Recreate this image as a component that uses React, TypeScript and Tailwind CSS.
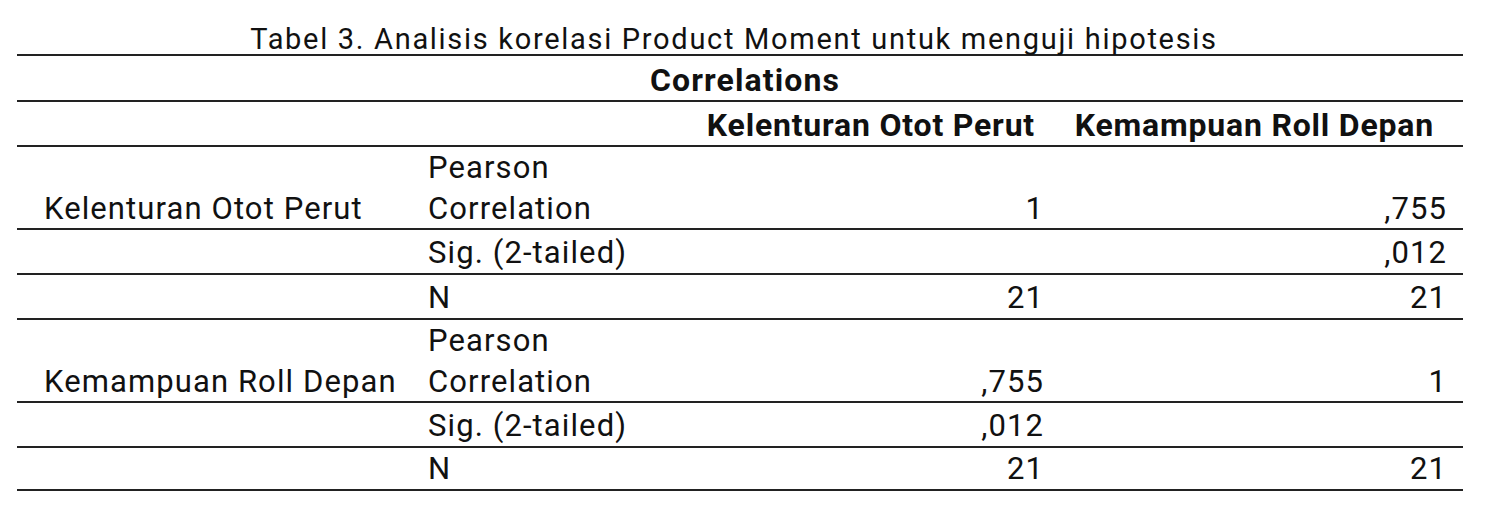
const font = { fontFamily: 'Roboto, "Liberation Sans", sans-serif' };

type Row = {
  label?: string;
  stat: string[];
  a: string;
  b: string;
  tall?: boolean;
};

const rows: Row[] = [
  { label: "Kelenturan Otot Perut", stat: ["Pearson", "Correlation"], a: "1", b: ",755", tall: true },
  { stat: ["Sig. (2-tailed)"], a: "", b: ",012" },
  { stat: ["N"], a: "21", b: "21" },
  { label: "Kemampuan Roll Depan", stat: ["Pearson", "Correlation"], a: ",755", b: "1", tall: true },
  { stat: ["Sig. (2-tailed)"], a: ",012", b: "" },
  { stat: ["N"], a: "21", b: "21" },
];

export default function App() {
  return (
    <div className="w-[1500px] h-[522px] bg-white text-[#111]" style={font}>
      <div className="ml-[17px] w-[1446px]">
        <div className="h-[54px] flex items-end justify-center text-[29px] leading-[30px] tracking-[1.7px] pr-[12px]">
          Tabel 3. Analisis korelasi Product Moment untuk menguji hipotesis
        </div>
        <div className="border-t-2 border-[#222] h-[46px] flex items-end justify-center font-bold text-[32px] leading-[40px] tracking-[1.1px] pl-[10px]">
          Correlations
        </div>
        <div className="grid grid-cols-[395px_276px_374px_401px] border-t-2 border-[#222] h-[45px] items-end font-bold text-[32px] leading-[40px] tracking-[0.8px]">
          <div />
          <div />
          <div className="text-right pr-[27px]">Kelenturan Otot Perut</div>
          <div className="text-right pr-[29px]">Kemampuan Roll Depan</div>
        </div>
        {rows.map((r, i) => (
          <div
            key={i}
            className={`grid grid-cols-[395px_276px_374px_401px] border-t-2 border-[#222] items-end text-[31px] leading-[41px] tracking-[1.1px] ${
              r.tall ? "h-[83px]" : "h-[45px]"
            } ${i === rows.length - 1 ? "border-b-2" : ""}`}
          >
            <div className="pl-[27px] whitespace-nowrap">{r.label}</div>
            <div className="pl-[16px] whitespace-nowrap">
              {r.stat.map((s) => (
                <div key={s}>{s}</div>
              ))}
            </div>
            <div className="text-right pr-[18px]">{r.a}</div>
            <div className="text-right pr-[16px]">{r.b}</div>
          </div>
        ))}
      </div>
    </div>
  );
}
